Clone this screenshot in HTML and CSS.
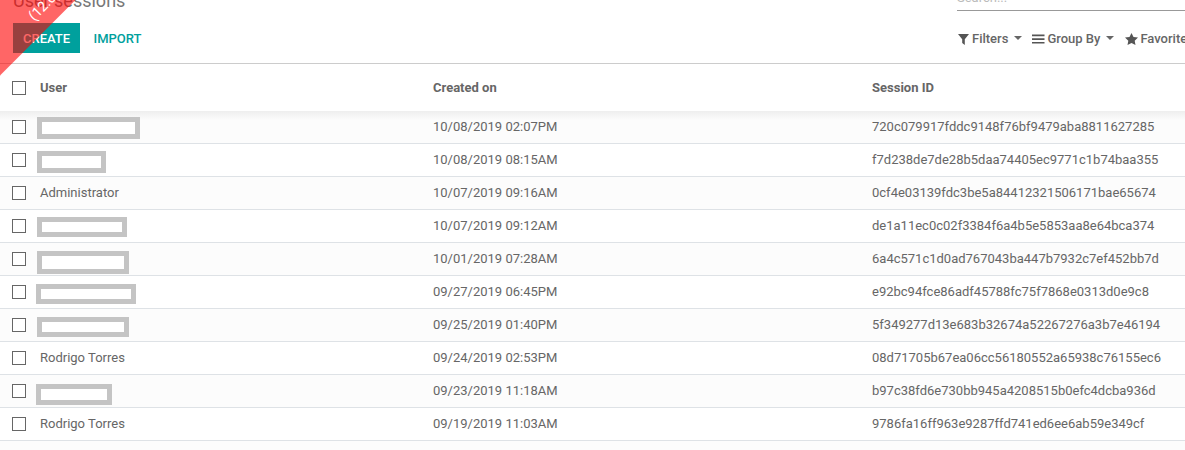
FILE: index.html
```html
<!DOCTYPE html>
<html lang="en">
<head>
<meta charset="utf-8">
<title>User sessions</title>
<link rel="stylesheet" href="styles.css">
</head>
<body>
<div class="ribbon"><span>TEST<br>(12.0)</span></div>
<header class="control-panel">
  <div class="cp-top">
    <h1 class="title">User sessions</h1>
    <div class="search"><span>Search...</span></div>
  </div>
  <div class="cp-bottom">
    <div class="actions">
      <button class="btn primary">CREATE</button>
      <button class="btn link">IMPORT</button>
    </div>
    <div class="filters">
      <span class="filter">
        <svg class="ico" width="12" height="12" viewBox="0 0 12 12"><path d="M0 1h11L6.800 6.200V12L4.200 10V6.200z"/></svg>Filters<i class="caret"></i>
      </span>
      <span class="filter">
        <svg class="ico" width="13" height="12" viewBox="0 0 13 12"><path d="M0 1.500h12.500v1.700H0zM0 5.200h12.500v1.700H0zM0 8.900h12.500v1.700H0z"/></svg>Group By<i class="caret"></i>
      </span>
      <span class="filter star">
        <svg class="ico" width="13" height="12" viewBox="0 0 13 12"><path d="M6.500 0l2 4 4.500.6-3.300 3.100.8 4.300-4-2.100-4 2.100.8-4.300L0 4.600 4.500 4z"/></svg>Favorites
      </span>
    </div>
  </div>
</header>
<table class="list">
  <thead>
    <tr><th class="c-check"><i class="check"></i></th><th class="c-user">User</th><th class="c-date">Created on</th><th>Session ID</th></tr>
  </thead>
  <tbody>
    <tr><td class="c-check"><i class="check"></i></td><td class="c-user masked"><i class="redact r1"></i></td><td>10/08/2019 02:07PM</td><td>720c079917fddc9148f76bf9479aba8811627285</td></tr>
    <tr><td class="c-check"><i class="check"></i></td><td class="c-user masked"><i class="redact r2"></i></td><td>10/08/2019 08:15AM</td><td>f7d238de7de28b5daa74405ec9771c1b74baa355</td></tr>
    <tr><td class="c-check"><i class="check"></i></td><td class="c-user">Administrator</td><td>10/07/2019 09:16AM</td><td>0cf4e03139fdc3be5a84412321506171bae65674</td></tr>
    <tr><td class="c-check"><i class="check"></i></td><td class="c-user masked"><i class="redact r4"></i></td><td>10/07/2019 09:12AM</td><td>de1a11ec0c02f3384f6a4b5e5853aa8e64bca374</td></tr>
    <tr><td class="c-check"><i class="check"></i></td><td class="c-user masked"><i class="redact r5"></i></td><td>10/01/2019 07:28AM</td><td>6a4c571c1d0ad767043ba447b7932c7ef452bb7d</td></tr>
    <tr><td class="c-check"><i class="check"></i></td><td class="c-user masked"><i class="redact r6"></i></td><td>09/27/2019 06:45PM</td><td>e92bc94fce86adf45788fc75f7868e0313d0e9c8</td></tr>
    <tr><td class="c-check"><i class="check"></i></td><td class="c-user masked"><i class="redact r7"></i></td><td>09/25/2019 01:40PM</td><td>5f349277d13e683b32674a52267276a3b7e46194</td></tr>
    <tr><td class="c-check"><i class="check"></i></td><td class="c-user">Rodrigo Torres</td><td>09/24/2019 02:53PM</td><td>08d71705b67ea06cc56180552a65938c76155ec6</td></tr>
    <tr><td class="c-check"><i class="check"></i></td><td class="c-user masked"><i class="redact r9"></i></td><td>09/23/2019 11:18AM</td><td>b97c38fd6e730bb945a4208515b0efc4dcba936d</td></tr>
    <tr><td class="c-check"><i class="check"></i></td><td class="c-user">Rodrigo Torres</td><td>09/19/2019 11:03AM</td><td>9786fa16ff963e9287ffd741ed6ee6ab59e349cf</td></tr>
  </tbody>
</table>
</body>
</html>
```
FILE: styles.css
```css
* { box-sizing: border-box; }
html, body { margin: 0; height: 100%; overflow: hidden; }
body { background: #fcfcfc; color: #666; font: 13px/18px Roboto, sans-serif; }
.ribbon { position: absolute; left: -114px; top: -33px; width: 300px; height: 60px; padding: 5px 0 0; background: rgba(255,0,0,.6); color: #fff; transform: rotate(-45deg); text-align: center; line-height: 24px; font-size: 14px; pointer-events: none; z-index: 5; }
.control-panel { background: #fff; height: 64px; border-bottom: 1px solid #ccc; padding: 0 0 0 13px; overflow: hidden; }
.cp-top { display: flex; justify-content: space-between; height: 23px; margin-top: -12px; }
.title { margin: 1px 0 0; font-size: 18px; line-height: 24px; font-weight: 400; color: #777; }
.search { width: 228px; height: 23px; border-bottom: 1px solid #999; color: #bbb; line-height: 20px; }
.cp-bottom { display: flex; justify-content: space-between; align-items: center; height: 30px; position: relative; top: 12px; }
.actions { display: flex; }
.btn { border: 0; height: 30px; padding: 0 10px; font: 500 13px Roboto, sans-serif; background: none; }
.btn.primary { background: #00a09d; color: #fff; width: 67px; }
.btn.link { color: #00a09d; margin-left: 3.500px; }
.filters { display: flex; gap: 10px; white-space: nowrap; width: 228px; padding: 1px 0 0 1px; }
.filter { display: inline-flex; align-items: center; font-weight: 500; color: #666; }
.star { margin-left: 1px; }
.ico { fill: #555; margin-right: 2px; }
.caret { display: inline-block; margin-left: 6px; border: 4px solid transparent; border-top-color: #666; border-bottom: 0; position: relative; top: -1px; }
.list { width: 100%; border-collapse: collapse; table-layout: fixed; background: #fff; }
.list th { height: 47px; text-align: left; font-weight: 700; padding: 0; background: #fff; }
.list td { height: 33px; padding: 0; border-bottom: 1px solid #dee2e6; }
.list tbody tr:first-child td { height: 32px; }
.list tbody tr:nth-child(odd) td { background: #fcfcfc; }
.list tbody tr:first-child td { background: linear-gradient(#eeeeee, #fcfcfc 9px); }
.c-check { width: 40px; padding-left: 12px !important; }
.c-user { width: 393px; }
.c-date { width: 439px; }
.masked { vertical-align: top; }
.check { display: block; width: 14px; height: 14px; border: 1px solid #666; background: #fff; }
.redact { display: block; height: 20px; border: 5px solid #c4c4c4; background: #fff; margin: 7px 0 0 -3px; }
.r1 { width: 103px; height: 22px; margin-top: 6px; }
.r2 { width: 69px; height: 22px; }
.r4 { width: 90px; }
.r5 { width: 92px; height: 23px; margin-top: 8px; }
.r6 { width: 100px; margin: 8px 0 0 -4px; }
.r7 { width: 92px; margin-top: 8px; }
.r9 { width: 76px; height: 21px; margin: 9px 0 0 -4px; }
```
